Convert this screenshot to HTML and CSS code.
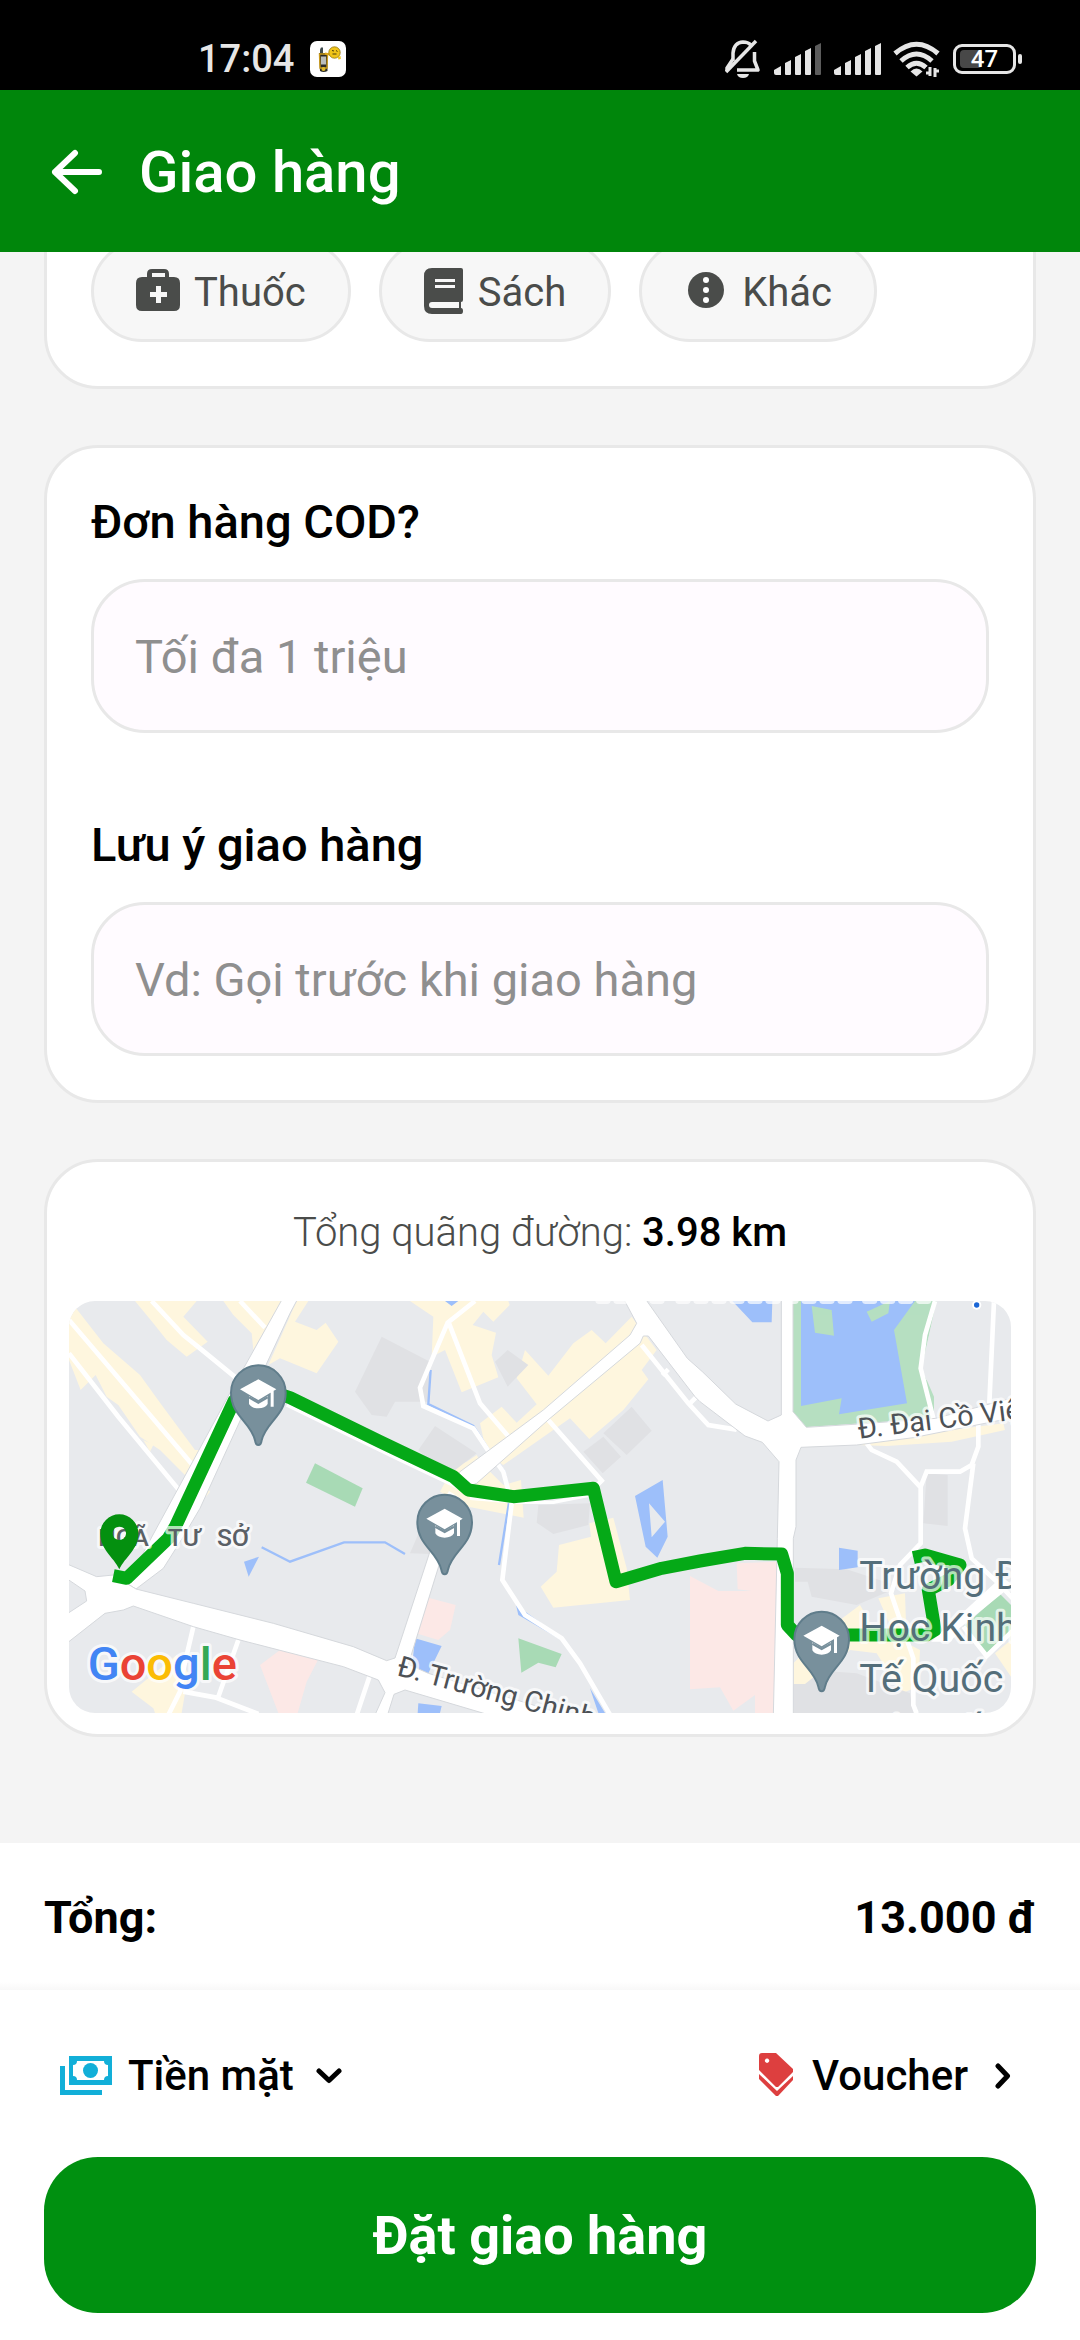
FILE: index.html
```html
<!DOCTYPE html>
<html lang="vi">
<head>
<meta charset="utf-8">
<meta name="viewport" content="width=device-width, initial-scale=1">
<title>Giao hàng</title>
<link rel="stylesheet" href="styles.css">
</head>
<body>
<div class="screen">
  <div class="status">
    <div class="status-left">
      <span class="clock">17:04</span>
      <svg class="app-badge" viewBox="0 0 36 36" aria-hidden="true">
        <rect width="36" height="36" rx="7" fill="#fff"/>
        <path d="M10 8.500l1-2h2v6h-3z" fill="#3f4a4c"/>
        <path d="M9 12h8.500v18q-4 2-7.500 0z" fill="#2c2c26"/>
        <path d="M9.500 13h8l-.5 14H10z" fill="none" stroke="#c99a1c" stroke-width="1.400"/>
        <rect x="11" y="15.500" width="5" height="8" fill="#b9bcbc"/>
        <circle cx="13.500" cy="28" r="2" fill="#e0b92a"/>
        <path d="M15 12.500l5 1" stroke="#e0a91a" stroke-width="2"/>
        <circle cx="24.500" cy="11.500" r="5.700" fill="#f0c419" stroke="#8f7410" stroke-width=".8"/>
        <path d="M28 16l2.500-1 .3 3-2.500.5z" fill="#f0c419"/>
        <path d="M22 9.500l2 .5m2-.5l1.500 1m-5 2.500h4" stroke="#4b3d0a" stroke-width="1"/>
      </svg>
    </div>
    <div class="status-right">
      <svg width="36" height="40" viewBox="0 0 36 40" fill="none" stroke="#e6e6e6" stroke-width="3.500" aria-hidden="true">
        <path d="M8 22V14Q9 3.500 18 3Q23 3 26 6M29.500 13V22L33 31H12" stroke-linejoin="round"/>
        <path d="M8 20L2 29V32"/>
        <path d="M1 33L31 2"/>
        <path d="M12 35h12q-1 4-6 4t-6-4z" fill="#e6e6e6" stroke="none"/>
      </svg>
      <svg width="48" height="32" viewBox="0 0 48 32" fill="#e6e6e6" aria-hidden="true">
        <path d="M1 27l7-4v9H3q-2 0-2-2zM12 20l6-3v14q0 1-1 1h-4q-1 0-1-1zM22 14l6-3v20q0 1-1 1h-4q-1 0-1-1zM32 8l6-3v26q0 1-1 1h-4q-1 0-1-1z"/>
        <path d="M42 3l6-3v31q0 1-1 1h-4q-1 0-1-1z" fill="#5c5c5c"/>
      </svg>
      <svg width="48" height="32" viewBox="0 0 48 32" fill="#e6e6e6" aria-hidden="true">
        <path d="M1 27l7-4v9H3q-2 0-2-2zM12 20l6-3v14q0 1-1 1h-4q-1 0-1-1zM22 14l6-3v20q0 1-1 1h-4q-1 0-1-1zM32 8l6-3v26q0 1-1 1h-4q-1 0-1-1zM42 3l6-3v31q0 1-1 1h-4q-1 0-1-1z"/>
      </svg>
      <svg width="48" height="36" viewBox="0 0 48 36" fill="none" stroke="#e6e6e6" stroke-width="5" aria-hidden="true">
        <path d="M2 12.500Q23.500-6 45 12.500M8 20Q23.500 6 39 20M14 26.500Q23.500 18 33 26.500"/>
        <path d="M17.500 30.500q6-6 12 0l-6 5z" fill="#e6e6e6" stroke="none"/>
        <path d="M33 31h3.500v-5M37 27v9M42 35v-9M42 30.500h4" stroke="#000" stroke-width="7"/>
        <path d="M33 32h3M37 26v9M42 36v-9M42 30h4" stroke-width="3"/>
      </svg>
      <span class="battery"><span class="battery-fill"></span><span class="battery-text">47</span></span>
    </div>
  </div>

  <header class="appbar">
    <button class="back" type="button" aria-label="Quay lại">
      <svg width="52" height="46" viewBox="0 0 52 46" fill="none" stroke="#fff" stroke-width="6" stroke-linecap="round" stroke-linejoin="round" aria-hidden="true"><path d="M24 4L4 23l20 19M4 23h44"/></svg>
    </button>
    <h1>Giao hàng</h1>
  </header>

  <main class="content">
    <section class="card card-types">
      <button class="chip" type="button">
        <svg width="44" height="50" viewBox="0 0 44 50" aria-hidden="true"><path fill="#4a4c4a" fill-rule="evenodd" d="M11 9V6q0-5 5-5h12q5 0 5 5v3h5q6 0 6 6v22q0 6-6 6H6q-6 0-6-6V15q0-6 6-6zm5 0h13V5H16zm4 9v6h-6v5h6v6h5v-6h6v-5h-6v-6z"/></svg>
        <span>Thuốc</span>
      </button>
      <button class="chip" type="button">
        <svg width="40" height="50" viewBox="0 0 40 50" aria-hidden="true"><path fill="#4a4c4a" fill-rule="evenodd" d="M8 0h29q2 0 2 2v30q0 2-2 2v6q2 0 2 3t-2 3H8q-8 0-8-8V8q0-8 8-8zm3 11v3h20v-3zm0 6v3h20v-3zM8 34q-3 0-3 3t3 3h27v-6z"/></svg>
        <span>Sách</span>
      </button>
      <button class="chip" type="button">
        <svg width="44" height="50" viewBox="0 0 44 50" aria-hidden="true"><circle cx="22" cy="22" r="18" fill="#4a4c4a"/><g fill="#fff"><circle cx="22" cy="12" r="3"/><circle cx="22" cy="22" r="3"/><circle cx="22" cy="32" r="3"/></g></svg>
        <span>Khác</span>
      </button>
    </section>

    <section class="card card-form">
      <div class="field">
        <label for="cod">Đơn hàng COD?</label>
        <input id="cod" type="text" placeholder="Tối đa 1 triệu">
      </div>
      <div class="field">
        <label for="note">Lưu ý giao hàng</label>
        <input id="note" type="text" placeholder="Vd: Gọi trước khi giao hàng">
      </div>
    </section>

    <section class="card card-map">
      <p class="distance">Tổng quãng đường: <strong>3.98 km</strong></p>
      <svg class="map" viewBox="0 0 2826 1236" preserveAspectRatio="xMidYMid slice" role="img" aria-label="Bản đồ lộ trình">
        <defs>
          <g id="school">
            <path d="M0 157q-8 0-10-14C-22 88-82 70-82 0a82 82 0 0 1 164 0C82 70 22 88 10 143Q8 157 0 157z" fill="#78909c" stroke="#607d8b" stroke-width="6"/>
            <path d="M-55-10L0-40l54 30L0 22zM-28 10L0 28l28-18v24Q20 47 0 47t-28-13zM37-8h9v50h-9z" fill="#fff"/>
            <path d="M-28 14L0 30l28-16" fill="none" stroke="#78909c" stroke-width="7"/>
          </g>
        </defs>
        <rect width="2826" height="1236" fill="#e8eaed"/>

        <!-- Built-up, commercial and hospital areas -->
        <g fill="#fef6de">
          <path transform="translate(-27 -33)" d="M27 75l20-22 83 107 110 95 65 90 100 135h35l-45 95-95-95-60-40-65-95-35-25-33-65-45 45-35-90zM250 450l30 15-10 20zM225 33h185l-40 47 73 75-63 45-60-50-40-50zM490 33h175l-85 147-5-50-55-55zM710 33h35l-40 62 65 25 27-22 38 57-65 95-110-45-35 20zM215 1205l135-110 35 55-20 119h-80l-5-14zM440 590l10 15-12 15z"/>
          <path transform="translate(933 -33)" d="M90 33h295l4 12-49 50-30-30-32 40 70 23-13 67 20 67-110 45-50-127-40 20 5-120zM410 265l12-40 13-45 70 77 75-97 55-40 42 40 78-80 75 100-45 60 20 28-75 92-102 87-58-62-200 140-50-35-20-90 65-50 45 48 60-55zM220 530l40-15 30-20 15 25 65 65 53-15 8 113-166-33-85-45zM700 683l40 152 10 95-230 23-38-63 48-45 7-80 96-25-5-40z"/>
          <path transform="translate(1893 -33)" d="M470 465l170-30 270-35 5 20-160 35-195 13zM280 1182v-62l100-100 100-75 60 105 50 0-55-125 80-15 5 150 40 20-5 110-50 20-75-120-80-10-110 102zM885 1090l48-40v110zM278 1245l10 24h-10z"/>
        </g>
        <g fill="#e0e1e4">
          <path transform="translate(-27 -33)" d="M885 305l80-165 145 75v120h-105l-25 45-45-5z"/>
          <path transform="translate(933 -33)" d="M345 215l38-35 62 45-62 65zM115 480l50-72 125 82-90 70zM610 485l60-45 53 60-55 50zM670 430l85-80 60 72-75 73zM475 645l155-5-5 65-105 27-50-34zM90 790l30-70 35 72z"/>
          <path transform="translate(1893 -33)" d="M680 550l63 5v153l-73-8zM285 833l155 5 160 52-130 55-135-25-12-45h-38zM280 1269v-87h35l50-40 105 8 160 60 10 59z"/>
        </g>
        <g fill="#fce8e6">
          <path transform="translate(-27 -33)" d="M600 1125l60-45 115 28-35 67-27 94h-58z"/>
          <path transform="translate(933 -33)" d="M145 923l82 22-17 75-35 30-67-20z"/>
          <path transform="translate(1893 -33)" d="M-30 858l85 45h100l-42-5-3-78 127-5v185l-15 269h-57v-54l-65 47-40-70-90 6z"/>
        </g>

        <!-- Parks and water -->
        <g fill="#a8dab5">
          <path transform="translate(-27 -33)" d="M765 520l143 75-23 55-147-72z"/>
          <path transform="translate(933 -33)" d="M415 1045l130 47-18 40-52-14-51 30z"/>
        </g>
        <g transform="translate(1893 -33)">
          <path fill="#b6dfc1" d="M272 33h438l-45 202 37 85v65l-390 27-40-47z"/>
          <path fill="#9dbffa" d="M303 33h342l-63 87 39 220-204 33 8-48-122 23zM97 33h120l-2 64h-58zM417 773l56 9v50l-56 8z"/>
          <path fill="#b6dfc1" d="M335 48l60 12 7 77-57-9zM500 65l70-32-5 37-50 25z"/>
          <path fill="#e8eaed" d="M710 33l-45 202 14 35 100 0V33z"/>
          <path fill="#a8dab5" d="M900 912l33 33v75l-73 70-70-80z"/>
        </g>
        <g fill="#9dbffa">
          <path transform="translate(-27 -33)" d="M552 815l45-15-31 60z"/>
          <path transform="translate(933 -33)" fill-rule="evenodd" d="M848 570l15 170-31 63-35-33-32-152zM807 640l8 102 40-47zM105 1045l80 23-40 82-50-10zM115 1240l70 8-5 21h-67zM195 33h40l-20 15zM408 945l137 98v8L415 975zM630 1195l45 74h-20z"/>
        </g>
        <g fill="none" stroke="#9dbffa" stroke-width="7">
          <path transform="translate(-27 -33)" d="M605 772l85 43 162-58h123l60 35"/>
          <path transform="translate(933 -33)" d="M152 240l-7 102 135 66 55 85 37 50 18 75-33 207"/>
        </g>

        <!-- Minor streets -->
        <g fill="none" stroke="#fff" stroke-width="14">
          <path transform="translate(-27 -33)" d="M27 90l358 420 25 30M27 190l148 190 190 230v30M275 33l95 102 50 40 110 90M540 33l75 80M400 1010l-28 120-12 75-35 70M535 1050l-60 170M370 1205l95 17 130 50M930 1155l-40 120"/>
          <path transform="translate(933 -33)" d="M285 33l-82 65-83 195 10 55 150 67 50 75 40 55 25 95-28 230 68 105 110 70 55 75 90 154M205 95l95 245 90 105M505 390l160 182-15 15M785 165l140 175 60 65 85 14M865 238l-18 18M947 323l-18 18"/>
          <path transform="translate(1893 -33)" d="M705 33l-30 102-13 100 38 150M882 33l-14 307M835 400v70l-20 55-35 20H680l-18 45v170l-62 65-27 85 17 50 50 145v140l10 25M500 460l15 20 75 35 72 77M820 520l-25 195 20 90 75 70M905 890l33 35M790 1010l70 88 78-75M770 1030l-40 20"/>
        </g>

        <!-- Main roads -->
        <g fill="#fff" stroke="#d5d8dc" stroke-width="3">
          <path d="M641-8h46l-24 45-135 290-135 295-50 85-60 95-82 62-28-17 320-590z"/>
          <path d="M1663-8l40 75-20 35-260 225-250 185-25 30 25 25 50-20 220-195 270-225 10-22h15l140 182 15 15 135 103 52 19 50 58-5 230-12 532h60V712l8-35V477l15-38 167-7 170-22 300-60v-60l-233 62-230 17-158 10-40-47V-8h-35v350l-40 18-97-51-100-97-45-40L1728-8z"/>
          <path d="M-8 788l91 39 50-5 40 25 28 17 172 43 240 60 240 70 100 42 25-8 105-320h40L1018 1090l60 27 420 127h-230l-260-77-33 13-20 64h-38l31-69-20-38-105-40-310-80-140-40-180-62-30 12-55 10-116 91v-88l61-40-5-30-56-38z"/>
          <path d="M1140 570l40 25-30 40-40-10z" stroke="none"/>
          <path d="M2798 827l33 25-160 130-25 40h-60z" stroke="none"/>
        </g>
        <path transform="translate(933 -33)" d="M270 625l150 12h100l110-22" fill="none" stroke="#fff" stroke-width="10"/>
        <path transform="translate(-27 -33)" d="M680 345l340 165 190 90" fill="none" stroke="#fff" stroke-width="10"/>

        <!-- Delivery route -->
        <path d="M133 824L173 832 298 712 320 675 495 300 555 255 663 290 933 422 1153 527 1198 567 1333 587 1573 562 1641 842 1778 802 1893 780 2028 757 2138 759 2155 817 2155 972 2183 1002 2573 1002 2598 987 2578 867 2638 837 2673 792 2568 762 2533 770" fill="none" stroke="#05a917" stroke-width="39" stroke-linejoin="round"/>

        <!-- Clipped labels along the edges -->
        <path d="M1590-2h200M1830-2h520M2390-2h200" stroke="#fff" stroke-width="22" stroke-dasharray="24 30" stroke-linecap="round" opacity=".7"/>
        <circle cx="2723" cy="12" r="14" fill="#fff"/>
        <circle cx="2723" cy="12" r="8" fill="#1a66d6"/>

        <g class="map-label">
          <text class="map-district" y="735"><tspan x="88">NGÃ</tspan> <tspan x="296">TƯ</tspan> <tspan x="444">SỞ</tspan></text>
          <text class="map-street" transform="translate(2370 413) rotate(-7)">Đ. Đại Cồ Việt</text>
          <text class="map-street" transform="translate(980 1122) rotate(15)">Đ. Trường Chinh</text>
        </g>

        <path transform="translate(151 697)" fill="#04900f" fill-rule="evenodd" d="M0 108C-18 70-57 50-57 0a57 57 0 0 1 114 0C57 50 18 70 0 108zM0-20a20 20 0 1 0 .1 0z"/>
        <use href="#school" x="568" y="275"/>
        <use href="#school" x="1127" y="663"/>
        <use href="#school" x="2258" y="1014"/>

        <text class="map-label map-place"><tspan x="2371" y="864">Trường Đại</tspan> <tspan x="2371" y="1019">Học Kinh</tspan> <tspan x="2371" y="1172">Tế Quốc</tspan> <tspan x="2371" y="1330">Dân số</tspan></text>
        <text class="map-label map-logo" x="56" y="1137"><tspan fill="#4285f4">G</tspan><tspan fill="#ea4335">o</tspan><tspan fill="#fbbc04">o</tspan><tspan fill="#4285f4">g</tspan><tspan fill="#34a853">l</tspan><tspan fill="#ea4335">e</tspan></text>
      </svg>
    </section>
  </main>

  <footer class="checkout">
    <div class="total"><span>Tổng:</span><span>13.000 đ</span></div>
    <div class="options">
      <button class="option" type="button">
        <svg width="52" height="40" viewBox="0 0 52 40" aria-hidden="true"><path fill="#12afd8" fill-rule="evenodd" d="M9 0h43v29H9zm8 5q0 4-4 4v11q4 0 4 4h27q0-4 4-4V9q-4 0-4-4zM0 10h5v24h37v5H0z"/><circle cx="30.500" cy="14.500" r="7.500" fill="#12afd8"/></svg>
        <span>Tiền mặt</span>
        <svg width="26" height="26" viewBox="0 0 26 26" fill="none" stroke="#000" stroke-width="5" stroke-linecap="round" stroke-linejoin="round" aria-hidden="true"><path d="M3 8l10 9.500L23 8"/></svg>
      </button>
      <button class="option" type="button">
        <svg width="37" height="46" viewBox="0 0 37 46" aria-hidden="true"><path fill="#dd3f3f" fill-rule="evenodd" d="M3 0h14l17 16v3L19 34h-2L0 17V3q0-3 3-3zm5 5.500a2.200 2.200 0 1 0 .1 0zM0 21l18 17 16-15v4L19 43h-2L0 26z"/></svg>
        <span>Voucher</span>
        <svg width="26" height="26" viewBox="0 0 26 26" fill="none" stroke="#000" stroke-width="5" stroke-linecap="round" stroke-linejoin="round" aria-hidden="true"><path d="M8 3l9.500 10L8 23"/></svg>
      </button>
    </div>
    <button class="submit" type="button">Đặt giao hàng</button>
  </footer>
</div>
</body>
</html>
```
FILE: styles.css
```css
* { box-sizing: border-box; }

body {
  margin: 0;
  background: #f4f4f4;
  color: #000;
  font-family: Roboto, "Noto Sans", sans-serif;
}

button {
  border: 0;
  padding: 0;
  background: none;
  color: inherit;
  font: inherit;
}

svg { display: block; flex: none; }

.screen {
  display: flex;
  flex-direction: column;
  height: 100vh;
}

/* System status bar */
.status {
  display: flex;
  justify-content: space-between;
  align-items: center;
  height: 90px;
  padding: 28px 64px 0 198px;
  background: #000;
  color: #e6e6e6;
}

.status-left { display: flex; align-items: center; gap: 16px; }
.clock { font-size: 38px; line-height: 44px; font-weight: 500; }
.app-badge { width: 36px; height: 36px; }
.status-right { display: flex; align-items: center; gap: 12px; }

.battery {
  position: relative;
  display: flex;
  align-items: center;
  justify-content: center;
  width: 63px;
  height: 30px;
  border: 3px solid #e6e6e6;
  border-radius: 9px;
}

.battery::after {
  content: "";
  position: absolute;
  right: -9px;
  width: 4px;
  height: 10px;
  border-radius: 2px;
  background: #e6e6e6;
}

.battery-fill {
  position: absolute;
  left: 4px;
  width: 22px;
  height: 18px;
  border-radius: 4px;
  background: #484848;
}

.battery-text { position: relative; font-size: 24px; line-height: 24px; font-weight: 500; color: #fff; }

/* App bar */
.appbar {
  display: flex;
  align-items: center;
  gap: 36px;
  height: 162px;
  padding: 2px 51px 0;
  background: #00860b;
  color: #fff;
}

.appbar h1 { margin: 0; font-size: 58px; line-height: 64px; font-weight: 500; }

/* Scrolled content */
.content {
  flex: 1;
  min-height: 0;
  display: flex;
  flex-direction: column;
  justify-content: flex-end;
  gap: 56px;
  overflow: hidden;
  padding: 0 44px 106px;
}

.card {
  flex: none;
  border: 3px solid #e8e8e8;
  border-radius: 54px;
  background: #fff;
}

.card-types {
  display: flex;
  flex-wrap: wrap;
  gap: 28px;
  padding: 44px;
}

.chip {
  display: flex;
  align-items: center;
  gap: 14px;
  height: 102px;
  padding: 4px 42px 0;
  border: 3px solid #e8e8e8;
  border-radius: 51px;
  background: #f7f7f7;
  color: #4a4c4a;
  font-size: 40px;
  line-height: 48px;
}

.card-form {
  display: flex;
  flex-direction: column;
  gap: 85px;
  padding: 47px 44px 44px;
}

.field { display: flex; flex-direction: column; gap: 30px; }
.field label { font-size: 47px; line-height: 54px; font-weight: 500; }

.field input {
  width: 100%;
  height: 154px;
  padding: 0 41px;
  border: 3px solid #e8e8e8;
  border-radius: 54px;
  background: #fffbff;
  color: #000;
  font: 47px/54px Roboto, "Noto Sans", sans-serif;
}

.field input::placeholder { color: #8f8f8f; opacity: 1; }

.card-map { padding: 44px 22px 21px; }

.distance {
  margin: 0 0 41px;
  color: #4a4c4a;
  font-size: 40px;
  line-height: 54px;
  font-weight: 300;
  text-align: center;
}

.distance strong { color: #000; font-weight: 500; }

/* Map */
.map {
  width: 100%;
  border-radius: 26px;
  overflow: hidden;
}

.map-label {
  stroke: rgba(255, 255, 255, 0.7);
  stroke-width: 18px;
  stroke-linejoin: round;
  paint-order: stroke;
}

.map-district { font-size: 74px; font-weight: 500; fill: #5b6066; }
.map-street { font-size: 86px; fill: #4d5156; }
.map-place { font-size: 118px; fill: #546e7a; }
.map-logo { font-size: 141px; font-weight: 500; }

/* Checkout panel */
.checkout { background: #fff; padding-bottom: 27px; }

.total {
  display: flex;
  justify-content: space-between;
  padding: 48px 44px 45px;
  background: linear-gradient(#fff calc(100% - 8px), #f8f8f8);
  font-size: 45px;
  line-height: 54px;
  font-weight: 700;
}

.options {
  display: flex;
  justify-content: space-between;
  padding: 58px 64px 53px 60px;
}

.option {
  display: flex;
  align-items: center;
  gap: 16px;
  font-size: 42px;
  line-height: 56px;
  font-weight: 500;
}

.option span { margin-right: 6px; }

.submit {
  display: block;
  width: calc(100% - 88px);
  margin: 0 44px;
  padding: 49px 0 47px;
  border-radius: 54px;
  background: #009010;
  color: #fff;
  font-size: 54px;
  line-height: 60px;
  font-weight: 700;
}
```
